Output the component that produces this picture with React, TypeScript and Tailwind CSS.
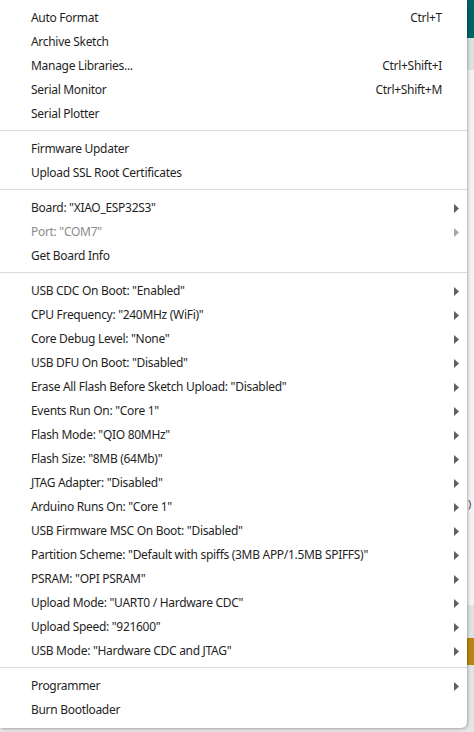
import React from "react";

type Item = { label: string; shortcut?: string; sub?: boolean; disabled?: boolean };

const groups: Item[][] = [
  [
    { label: "Auto Format", shortcut: "Ctrl+T" },
    { label: "Archive Sketch" },
    { label: "Manage Libraries...", shortcut: "Ctrl+Shift+I" },
    { label: "Serial Monitor", shortcut: "Ctrl+Shift+M" },
    { label: "Serial Plotter" },
  ],
  [{ label: "Firmware Updater" }, { label: "Upload SSL Root Certificates" }],
  [
    { label: 'Board: "XIAO_ESP32S3"', sub: true },
    { label: 'Port: "COM7"', sub: true, disabled: true },
    { label: "Get Board Info" },
  ],
  [
    { label: 'USB CDC On Boot: "Enabled"', sub: true },
    { label: 'CPU Frequency: "240MHz (WiFi)"', sub: true },
    { label: 'Core Debug Level: "None"', sub: true },
    { label: 'USB DFU On Boot: "Disabled"', sub: true },
    { label: 'Erase All Flash Before Sketch Upload: "Disabled"', sub: true },
    { label: 'Events Run On: "Core 1"', sub: true },
    { label: 'Flash Mode: "QIO 80MHz"', sub: true },
    { label: 'Flash Size: "8MB (64Mb)"', sub: true },
    { label: 'JTAG Adapter: "Disabled"', sub: true },
    { label: 'Arduino Runs On: "Core 1"', sub: true },
    { label: 'USB Firmware MSC On Boot: "Disabled"', sub: true },
    { label: 'Partition Scheme: "Default with spiffs (3MB APP/1.5MB SPIFFS)"', sub: true },
    { label: 'PSRAM: "OPI PSRAM"', sub: true },
    { label: 'Upload Mode: "UART0 / Hardware CDC"', sub: true },
    { label: 'Upload Speed: "921600"', sub: true },
    { label: 'USB Mode: "Hardware CDC and JTAG"', sub: true },
  ],
  [{ label: "Programmer", sub: true }, { label: "Burn Bootloader" }],
];

function Arrow({ disabled }: { disabled?: boolean }) {
  return (
    <svg width="5" height="9" viewBox="0 0 5 9" className="shrink-0">
      <path d="M0 0 L5 4.5 L0 9 Z" fill={disabled ? "#a8a8a8" : "#5f5f5f"} />
    </svg>
  );
}

function Row({ item }: { item: Item }) {
  return (
    <div className="flex h-[24px] items-center pl-[31px] pr-[8px]">
      <span className={`flex-1 whitespace-nowrap ${item.disabled ? "text-[#8c8c8c]" : "text-[#1f1f1f]"}`}>
        {item.label}
      </span>
      {item.shortcut && <span className="mr-[17px] whitespace-nowrap text-[#1f1f1f]">{item.shortcut}</span>}
      {item.sub && <Arrow disabled={item.disabled} />}
    </div>
  );
}

export default function App() {
  return (
    <div
      className="relative h-[732px] w-[474px] overflow-hidden bg-[#f3f3f3]"
      style={{ fontFamily: '"Noto Sans", "Open Sans", sans-serif' }}
    >
      {/* background app strips */}
      <div className="absolute right-0 top-0 flex h-full w-[7px] flex-col">
        <div className="h-[38px] bg-[#006468]" />
        <div className="h-[32px] bg-[#dae1e1]" />
        <div className="relative h-[535px] bg-[#f3f3f3]">
          <span className="absolute left-[1px] top-[428px] text-[11px] leading-none text-[#444]">)</span>
        </div>
        <div className="h-[33px] bg-[#dde3e3]" />
        <div className="h-[27px] bg-[#b8860f]" />
        <div className="flex-1 bg-[#e1e6e6]" />
      </div>
      <div className="absolute bottom-0 left-0 h-[4px] w-full bg-[#e6e6e6]" />

      {/* menu */}
      <div className="absolute left-0 top-0 w-[467px] rounded-br-[6px] bg-white pb-[6px] pt-[6px] text-[12px] tracking-[-0.3px] shadow-[1px_1px_3px_rgba(0,0,0,0.28)]">
        {groups.map((g, gi) => (
          <div key={gi}>
            {gi > 0 && <div className="mb-[6px] mt-[4px] h-px bg-[#dadada]" />}
            {g.map((it) => (
              <Row key={it.label} item={it} />
            ))}
          </div>
        ))}
      </div>
    </div>
  );
}
